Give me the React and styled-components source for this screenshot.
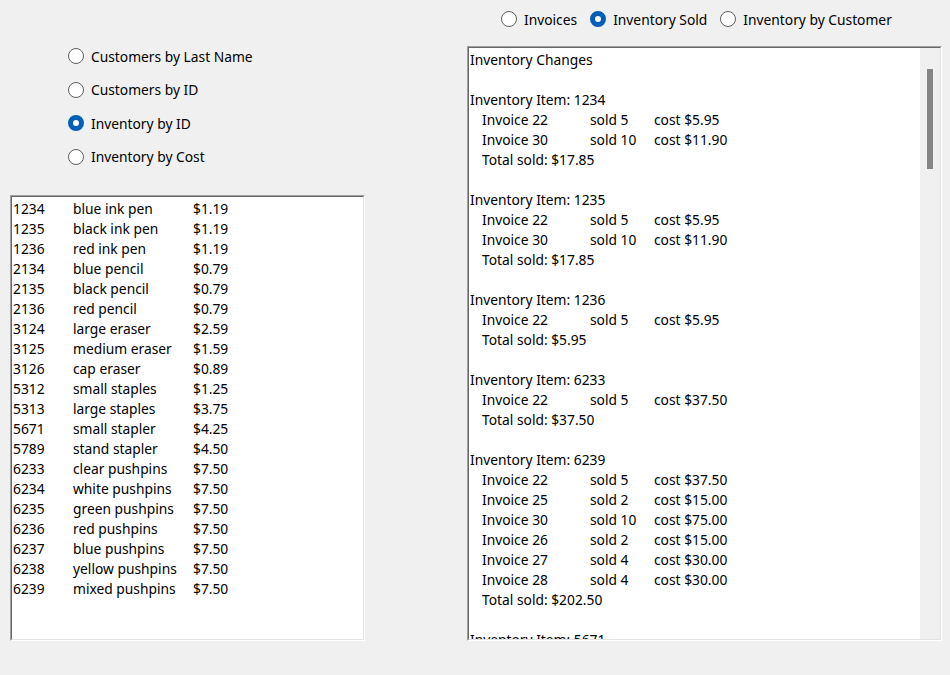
import React from "react";
import styled, { createGlobalStyle } from "styled-components";

const GlobalStyle = createGlobalStyle`
  html, body {
    margin: 0;
    padding: 0;
    background: #f0f0f0;
  }
  body {
    font-family: "Noto Sans", "Segoe UI", sans-serif;
    font-size: 13.8px;
    color: #000;
  }
`;

const Window = styled.div`
  width: 950px;
  height: 675px;
  display: grid;
  grid-template-columns: 457px 1fr;
  box-sizing: border-box;
  padding: 0 8px 0 10px;
  overflow: hidden;
`;

const LeftCol = styled.div`
  display: flex;
  flex-direction: column;
`;

const RightCol = styled.div`
  display: flex;
  flex-direction: column;
`;

const SortGroup = styled.div`
  flex: none;
  display: flex;
  flex-direction: column;
  gap: 13.5px;
  padding: 46px 0 0 58px;
  height: 195px;
  box-sizing: border-box;
`;

const ViewGroup = styled.div`
  flex: none;
  display: flex;
  align-items: flex-start;
  gap: 13px;
  height: 46px;
  box-sizing: border-box;
  padding: 9px 0 0 34px;
`;

const RadioRow = styled.label`
  display: flex;
  align-items: center;
  gap: 7px;
  height: 20px;
  white-space: nowrap;
`;

const Dot = styled.span`
  width: 16px;
  height: 16px;
  box-sizing: border-box;
  border-radius: 50%;
  flex: none;
  background: #fff;
  border: ${(p) => (p.$on ? "5px solid #005fb8" : "1px solid #5f5f5f")};
`;

const Radio = ({ on, children }) => (
  <RadioRow>
    <Dot $on={on} />
    <span>{children}</span>
  </RadioRow>
);

const Sunken = styled.div`
  flex: none;
  border: 1px solid;
  border-color: #a0a0a0 #ffffff #ffffff #a0a0a0;
  background: #fff;
  box-sizing: border-box;
`;

const SunkenInner = styled.div`
  border: 1px solid;
  border-color: #696969 #e3e3e3 #e3e3e3 #696969;
  height: 100%;
  box-sizing: border-box;
  overflow: hidden;
  display: flex;
`;

const ListBox = styled(Sunken)`
  width: 355px;
  height: 446px;
`;

const ListBody = styled.div`
  padding: 2px 0 0 1px;
  flex: 1;
`;

const ListRow = styled.div`
  display: grid;
  grid-template-columns: 60px 120px 1fr;
  height: 20px;
  line-height: 20px;
  white-space: nowrap;
`;

const TextBox = styled(Sunken)`
  width: 475px;
  height: 595px;
`;

const TextBody = styled.div`
  flex: 1;
  padding: 2px 0 0 1px;
  overflow: hidden;
`;

const Line = styled.div`
  height: 20px;
  line-height: 20px;
  white-space: nowrap;
  padding-left: ${(p) => (p.$indent ? "12px" : "0")};
`;

const InvoiceLine = styled.div`
  display: grid;
  grid-template-columns: 108px 64px 1fr;
  height: 20px;
  line-height: 20px;
  padding-left: 12px;
  white-space: nowrap;
`;

const ScrollTrack = styled.div`
  width: 20px;
  flex: none;
  background: #f0f0f0;
  display: flex;
  justify-content: center;
  padding-top: 21px;
`;

const ScrollThumb = styled.div`
  width: 6px;
  height: 100px;
  background: #858585;
`;

const inventory = [
  ["1234", "blue ink pen", "$1.19"],
  ["1235", "black ink pen", "$1.19"],
  ["1236", "red ink pen", "$1.19"],
  ["2134", "blue pencil", "$0.79"],
  ["2135", "black pencil", "$0.79"],
  ["2136", "red pencil", "$0.79"],
  ["3124", "large eraser", "$2.59"],
  ["3125", "medium eraser", "$1.59"],
  ["3126", "cap eraser", "$0.89"],
  ["5312", "small staples", "$1.25"],
  ["5313", "large staples", "$3.75"],
  ["5671", "small stapler", "$4.25"],
  ["5789", "stand stapler", "$4.50"],
  ["6233", "clear pushpins", "$7.50"],
  ["6234", "white pushpins", "$7.50"],
  ["6235", "green pushpins", "$7.50"],
  ["6236", "red pushpins", "$7.50"],
  ["6237", "blue pushpins", "$7.50"],
  ["6238", "yellow pushpins", "$7.50"],
  ["6239", "mixed pushpins", "$7.50"],
];

const changes = [
  {
    id: "1234",
    sales: [
      ["22", "5", "$5.95"],
      ["30", "10", "$11.90"],
    ],
    total: "$17.85",
  },
  {
    id: "1235",
    sales: [
      ["22", "5", "$5.95"],
      ["30", "10", "$11.90"],
    ],
    total: "$17.85",
  },
  { id: "1236", sales: [["22", "5", "$5.95"]], total: "$5.95" },
  { id: "6233", sales: [["22", "5", "$37.50"]], total: "$37.50" },
  {
    id: "6239",
    sales: [
      ["22", "5", "$37.50"],
      ["25", "2", "$15.00"],
      ["30", "10", "$75.00"],
      ["26", "2", "$15.00"],
      ["27", "4", "$30.00"],
      ["28", "4", "$30.00"],
    ],
    total: "$202.50",
  },
  { id: "5671", sales: [], total: null },
];

const App = () => {
  return (
    <>
      <GlobalStyle />
      <Window>
        <LeftCol>
          <SortGroup>
            <Radio>Customers by Last Name</Radio>
            <Radio>Customers by ID</Radio>
            <Radio on>Inventory by ID</Radio>
            <Radio>Inventory by Cost</Radio>
          </SortGroup>
          <ListBox>
            <SunkenInner>
              <ListBody>
                {inventory.map(([id, name, price]) => (
                  <ListRow key={id}>
                    <span>{id}</span>
                    <span>{name}</span>
                    <span>{price}</span>
                  </ListRow>
                ))}
              </ListBody>
            </SunkenInner>
          </ListBox>
        </LeftCol>
        <RightCol>
          <ViewGroup>
            <Radio>Invoices</Radio>
            <Radio on>Inventory Sold</Radio>
            <Radio>Inventory by Customer</Radio>
          </ViewGroup>
          <TextBox>
            <SunkenInner>
              <TextBody>
                <Line>Inventory Changes</Line>
                <Line />
                {changes.map((item) => (
                  <React.Fragment key={item.id}>
                    <Line>Inventory Item: {item.id}</Line>
                    {item.sales.map(([inv, sold, cost]) => (
                      <InvoiceLine key={inv}>
                        <span>Invoice {inv}</span>
                        <span>sold {sold}</span>
                        <span>cost {cost}</span>
                      </InvoiceLine>
                    ))}
                    {item.total && <Line $indent>Total sold: {item.total}</Line>}
                    {item.total && <Line />}
                  </React.Fragment>
                ))}
              </TextBody>
              <ScrollTrack>
                <ScrollThumb />
              </ScrollTrack>
            </SunkenInner>
          </TextBox>
        </RightCol>
      </Window>
    </>
  );
};

export default App;
